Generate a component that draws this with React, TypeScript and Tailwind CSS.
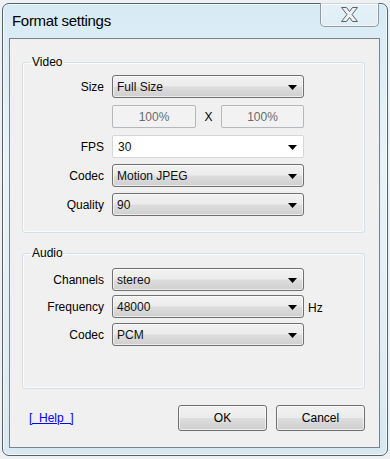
import type { ReactNode } from 'react';

const btnBg =
  'bg-[linear-gradient(180deg,#f2f2f2_0%,#ebebeb_48%,#dddddd_52%,#cfcfcf_100%)]';

function Arrow() {
  return (
    <svg width="9" height="5" viewBox="0 0 9 5" className="absolute right-[6px] top-[9px]">
      <polygon points="0,0 9,0 4.5,5" fill="#000" />
    </svg>
  );
}

function Select({ value, editable = false }: { value: string; editable?: boolean }) {
  return (
    <div
      className={
        editable
          ? 'relative flex h-[23px] items-center rounded-[2px] border border-[#d4d6d9] bg-white pl-[5px] text-[12px] text-[#111]'
          : `relative flex h-[23px] items-center rounded-[3px] border border-[#707070] ${btnBg} pl-[4px] text-[12px] text-[#111] shadow-[inset_0_0_0_1px_rgba(255,255,255,0.6)]`
      }
    >
      {value}
      <Arrow />
    </div>
  );
}

function Row({ label, children, className = '' }: { label: string; children: ReactNode; className?: string }) {
  return (
    <div className={`grid grid-cols-[81px_192px_auto] items-center gap-x-[8px] ${className}`}>
      <span className="text-right text-[12px] text-black">{label}</span>
      {children}
    </div>
  );
}

function GroupBox({ title, children, className = '' }: { title: string; children: ReactNode; className?: string }) {
  return (
    <fieldset
      className={`ml-[12px] w-[343px] rounded-[3px] border border-[#d5dfe5] shadow-[inset_0_0_0_1px_#fafbfc] ${className}`}
    >
      <legend className="ml-[7px] px-[2px] text-[12px] leading-[15px] text-black">{title}</legend>
      {children}
    </fieldset>
  );
}

export default function App() {
  return (
    <div className="h-[459px] w-[390px] overflow-hidden bg-[#eef1f3] pl-[2px] pt-[3px] font-['Liberation_Sans',Arial,sans-serif]">
      {/* window frame */}
      <div className="relative h-[453px] w-[386px] rounded-[7px] border border-[#55616b] bg-[linear-gradient(180deg,#d7eaf4_0%,#e8f3f8_35%,#e3eef4_70%,#d8e8f0_100%)] shadow-[inset_0_0_0_1px_rgba(255,255,255,0.7)]">
        <div className="h-[34px] pl-[9px] pt-[8px] text-[15px] leading-[17px] tracking-[-0.3px] text-black">
          Format settings
        </div>

        <button className="absolute right-[8px] top-[-1px] flex h-[24px] w-[59px] items-center justify-center rounded-b-[5px] border border-t-0 border-[#8d99a3] bg-[linear-gradient(180deg,rgba(255,255,255,0.35),rgba(255,255,255,0.15))] shadow-[inset_0_0_0_1px_rgba(255,255,255,0.6)]">
          <svg width="17" height="15" viewBox="-0.5 -0.5 17 15">
            <polygon
              points="0,0 5,0 8,4 11,0 16,0 10.5,7 16,14 11,14 8,10 5,14 0,14 5.5,7"
              fill="#eef0f2"
              stroke="#56616a"
              strokeWidth="1"
              strokeLinejoin="round"
            />
          </svg>
        </button>

        {/* client area */}
        <div className="ml-[6px] flex h-[410px] w-[371px] flex-col border border-[#76828c] bg-[#f0f0f0]">
          <GroupBox title="Video" className="mt-[16px] pb-[16px]">
            <Row label="Size" className="mt-[5px]">
              <Select value="Full Size" />
            </Row>
            <Row label="" className="mt-[7px]">
              <div className="flex items-center justify-between">
                <div className="flex h-[23px] w-[84px] items-center justify-center rounded-[2px] border border-[#b5b8bb] bg-[#f2f2f2] text-[12px] text-[#6a6a6a]">
                  100%
                </div>
                <span className="text-[12px] text-black">X</span>
                <div className="flex h-[23px] w-[83px] items-center justify-center rounded-[2px] border border-[#b5b8bb] bg-[#f2f2f2] text-[12px] text-[#6a6a6a]">
                  100%
                </div>
              </div>
            </Row>
            <Row label="FPS" className="mt-[7px]">
              <Select value="30" editable />
            </Row>
            <Row label="Codec" className="mt-[6px]">
              <Select value="Motion JPEG" />
            </Row>
            <Row label="Quality" className="mt-[6px]">
              <Select value="90" />
            </Row>
          </GroupBox>

          <GroupBox title="Audio" className="mt-[13px] pb-[42px]">
            <Row label="Channels" className="mt-[7px]">
              <Select value="stereo" />
            </Row>
            <Row label="Frequency" className="mt-[4px]">
              <Select value="48000" />
              <span className="-ml-[4px] mt-[2px] text-[12px] text-black">Hz</span>
            </Row>
            <Row label="Codec" className="mt-[5px]">
              <Select value="PCM" />
            </Row>
          </GroupBox>

          <div className="mt-[16px] flex items-center pl-[19px] pr-[14px]">
            <a href="#" className="whitespace-pre text-[12px] text-[#0000ff] underline">
              {'[  Help  ]'}
            </a>
            <div className="ml-auto flex gap-[9px]">
              <button className={`h-[26px] w-[89px] rounded-[3px] border border-[#707070] ${btnBg} text-[12px] text-black shadow-[inset_0_0_0_1px_rgba(255,255,255,0.6)]`}>
                OK
              </button>
              <button className={`h-[26px] w-[89px] rounded-[3px] border border-[#707070] ${btnBg} text-[12px] text-black shadow-[inset_0_0_0_1px_rgba(255,255,255,0.6)]`}>
                Cancel
              </button>
            </div>
          </div>
        </div>
      </div>
    </div>
  );
}
